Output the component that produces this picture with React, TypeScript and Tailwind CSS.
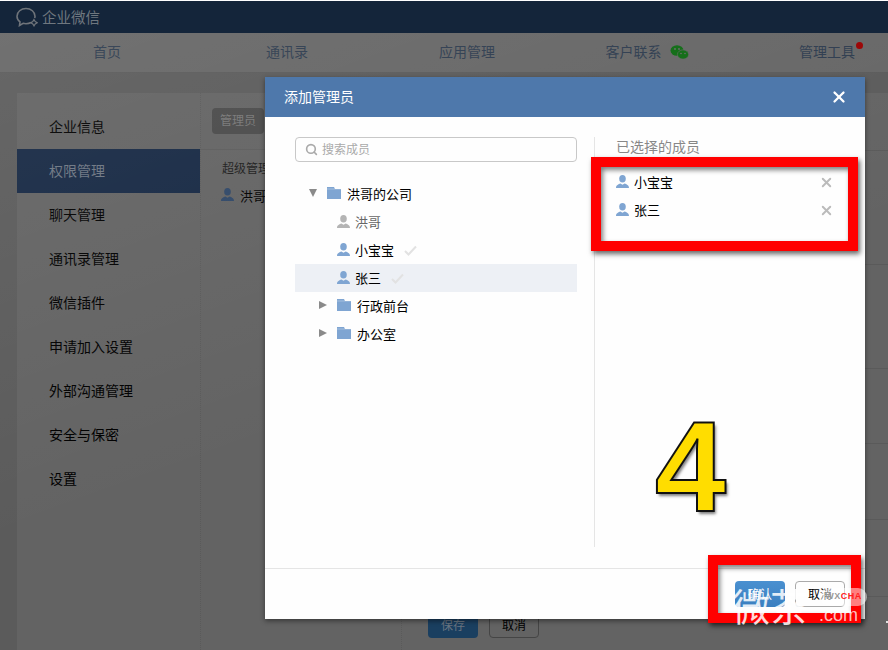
import React from 'react';
import { Search, X } from 'lucide-react';

const font = "font-['Noto_Sans_CJK_SC','Liberation_Sans',sans-serif]";

const Person: React.FC<{ color?: string }> = ({ color = '#7fa5d2' }) => (
  <svg width="13" height="13" viewBox="0 0 13 13" className="mb-[2px] shrink-0">
    <ellipse cx="6.5" cy="3.8" rx="3.300" ry="3.800" fill={color} />
    <path d="M0 13c0-2.900 2.600-3.600 4.400-4.400l2.100 1.100 2.100-1.100c1.800.8 4.400 1.500 4.400 4.400z" fill={color} />
  </svg>
);

const Folder: React.FC = () => (
  <svg width="14" height="12" viewBox="0 0 14 12" className="mb-[2px] shrink-0">
    <path d="M0 0h7l1 2h6v10H0z" fill="#7fa5d2" />
    <path d="M0 2h14" stroke="#fff" strokeWidth="0.6" opacity="0.5" />
  </svg>
);

const Arrow: React.FC<{ open?: boolean }> = ({ open }) => (
  <svg width="8" height="8" viewBox="0 0 8 8" className="mb-[2px] shrink-0">
    <path d={open ? 'M0 0h8L4 8z' : 'M0 0l8 4-8 4z'} fill="#8a8a8a" />
  </svg>
);

const Check: React.FC = () => (
  <svg width="13" height="11" viewBox="0 0 13 11" className="shrink-0">
    <path d="M1 6l3.500 3.500L12 1.500" fill="none" stroke="#e2e2e2" strokeWidth="2" />
  </svg>
);

const Wechat: React.FC = () => (
  <svg width="19" height="15" viewBox="0 0 19 15" className="mt-[2px] shrink-0">
    <ellipse cx="7" cy="5.500" rx="6.500" ry="5.200" fill="#0d6a12" />
    <ellipse cx="13" cy="9.500" rx="5.600" ry="4.600" fill="#0d6a12" stroke="#686868" strokeWidth="0.6" />
    <circle cx="5" cy="4" r="0.9" fill="#686868" />
    <circle cx="9" cy="4" r="0.9" fill="#686868" />
    <circle cx="11" cy="8.500" r="0.8" fill="#686868" />
    <circle cx="15" cy="8.500" r="0.8" fill="#686868" />
  </svg>
);

const Logo: React.FC = () => (
  <svg width="22" height="20" viewBox="0 0 22 20" className="shrink-0">
    <path d="M15 15.500c-1.400.8-3 1.200-5 1.200-1 0-2-.1-2.900-.4L3.500 18.500l.5-3.600C2 13.500 1 11.500 1 9.200 1 4.900 5 1.500 10 1.500s9 3.400 9 7.700c0 .7-.1 1.300-.3 1.900"
      fill="none" stroke="#6f747a" strokeWidth="1.600" />
    <path d="M18 12.500l1.200 2 2 1.200-2 1.200-1.200 2-1.200-2-2-1.200 2-1.200z" fill="none" stroke="#6f747a" strokeWidth="1.200" />
  </svg>
);

const navItems = ['首页', '通讯录', '应用管理'];
const sideItems = ['企业信息', '权限管理', '聊天管理', '通讯录管理', '微信插件', '申请加入设置', '外部沟通管理', '安全与保密', '设置'];
const rowHeights = ['h-[114px]', 'h-[104px]', 'h-[75px]', 'h-[76px]', 'h-[77px]'];

const TreeUser: React.FC<{ name: string; selected?: boolean; muted?: boolean; active?: boolean }> = ({ name, selected, muted, active }) => (
  <div className={`flex h-7 items-center pl-[42px] ${active ? 'bg-[#edf0f5]' : ''}`}>
    <Person color={muted ? '#b4b4b4' : '#7fa5d2'} />
    <span className={`ml-[5px] text-[13px] ${muted ? 'text-[#666]' : 'text-black'}`}>{name}</span>
    {selected && <span className="ml-[10px]"><Check /></span>}
  </div>
);

const TreeFolder: React.FC<{ name: string }> = ({ name }) => (
  <div className="flex h-7 items-center pl-6">
    <Arrow />
    <span className="ml-[10px]"><Folder /></span>
    <span className="ml-[6px] text-[13px] text-black">{name}</span>
  </div>
);

const Picked: React.FC<{ name: string }> = ({ name }) => (
  <div className="flex h-7 items-center">
    <Person />
    <span className="ml-[5px] text-[13px] text-black">{name}</span>
    <X size={15} strokeWidth={3} className="ml-auto text-[#bbb]" />
  </div>
);

const App: React.FC = () => {
  return (
    <div className={`relative h-[650px] w-[888px] overflow-hidden bg-[#5b5b5b] ${font}`}>
      <div className="h-px bg-white" />
      <div className="flex h-8 items-center gap-[4px] bg-[#14253a] pb-[1px] pl-[16px]">
        <Logo />
        <span className="text-[14.500px] text-[#6f777f]">企业微信</span>
      </div>
      <div className="flex h-10 border-b border-[#5a5a5a] bg-[#666] pb-[2px] pl-[17px]">
        {navItems.map(item => (
          <div key={item} className="flex w-[180px] shrink-0 items-center justify-center text-[14px] text-[#2d3b4e]">{item}</div>
        ))}
        <div className="flex w-[180px] shrink-0 items-center justify-center gap-2 text-[14px] text-[#2d3b4e]">
          客户联系
          <Wechat />
        </div>
        <div className="relative flex w-[180px] shrink-0 items-center justify-center text-[14px] text-[#2d3b4e]">
          管理工具
          <span className="absolute left-[119px] top-[9px] h-[7px] w-[7px] rounded-full bg-[#9a0000]" />
        </div>
      </div>

      <div className="ml-[17px] mt-5 flex h-[557px] bg-[#636363]">
        <div className="w-[184px] shrink-0 border-r border-dotted border-[#5a5a5a] pt-3">
          {sideItems.map(item => (
            <div
              key={item}
              className={`flex h-11 items-center pb-[2px] pl-8 text-[14px] ${item === '权限管理' ? 'bg-[#172944] text-[#6d7682]' : 'text-black'}`}
            >
              {item}
            </div>
          ))}
        </div>
        <div className="w-[201px] shrink-0 border-r border-dotted border-[#5a5a5a]">
          <div className="h-[57px] border-b border-[#5c5c5c] pl-[11px] pt-[15px]">
            <div className="flex h-[26px] w-[52px] items-center justify-center rounded-sm bg-[#4a4a4a] pb-[2px] text-[12px] text-[#777]">管理员</div>
          </div>
          <div className="pl-[21px] pt-[9px] text-[12px] text-[#1c1c1c]">超级管理员</div>
          <div className="mt-[9px] flex items-center gap-[6px] pl-5 text-[13px] text-black">
            <Person color="#2f4767" />
            洪哥
          </div>
        </div>
        <div className="flex-1">
          <div className="h-[58px] border-b border-[#5a5a5a]" />
          {rowHeights.map(h => (
            <div key={h} className={`${h} border-b border-[#5a5a5a]`} />
          ))}
          <div className="ml-[26px] mt-[15px] flex gap-[11px]">
            <div className="flex h-[26px] w-[50px] items-center justify-center rounded-sm bg-[#1a3f60] text-[12px] text-[#6a7580]">保存</div>
            <div className="flex h-[26px] w-[50px] items-center justify-center rounded-sm border border-[#454545] text-[12px] text-black">取消</div>
          </div>
        </div>
      </div>

      {/* the dim layer of the screenshot is lighter at the top left */}
      <div className="pointer-events-none absolute inset-x-0 bottom-0 top-[33px] bg-[linear-gradient(160deg,rgba(255,255,255,0.07),rgba(255,255,255,0)_55%)]" />

      <div className="absolute left-[265px] top-[77px] flex h-[542px] w-[600px] flex-col bg-[#fefefe] shadow-[0_2px_5px_rgba(0,0,0,0.45)]">
        <div className="flex h-10 shrink-0 items-center justify-between bg-[#4e78ab] pl-[19px] pr-[17px]">
          <span className="pb-[2px] text-[14px] text-white">添加管理员</span>
          <X size={18} strokeWidth={3} className="text-white" />
        </div>
        <div className="flex h-[451px] pt-5">
          <div className="ml-[30px] w-[282px] shrink-0">
            <div className="flex h-[25px] items-center rounded-sm border border-[#c8c8c8] pl-[9px]">
              <Search size={13} strokeWidth={3} className="text-[#aaa]" />
              <span className="ml-[4px] pb-[2px] text-[12px] text-[#aaa]">搜索成员</span>
            </div>
            <div className="mt-[18px]">
              <div className="flex h-7 items-center pl-[14px]">
                <Arrow open />
                <span className="ml-[10px]"><Folder /></span>
                <span className="ml-[6px] text-[13px] text-black">洪哥的公司</span>
              </div>
              <TreeUser name="洪哥" muted />
              <TreeUser name="小宝宝" selected />
              <TreeUser name="张三" selected active />
              <TreeFolder name="行政前台" />
              <TreeFolder name="办公室" />
            </div>
          </div>
          <div className="ml-[17px] h-[410px] flex-1 border-l border-[#e5e5e5] pl-[21px] pr-[31px]">
            <div className="text-[14px] leading-[18px] text-[#888]">已选择的成员</div>
            <div className="mt-[13px]">
              <Picked name="小宝宝" />
              <Picked name="张三" />
            </div>
          </div>
        </div>
        <div className="flex flex-1 items-start justify-end gap-[10px] border-t border-[#e5e5e5] pr-5 pt-3">
          <div className="flex h-[26px] w-[50px] items-center justify-center rounded-sm bg-[linear-gradient(#4a90d0,#3a7fc0)] text-[12px] text-white">确认</div>
          <div className="flex h-[26px] w-[50px] items-center justify-center rounded-sm border border-[#aaa] text-[12px] text-black">取消</div>
        </div>
      </div>

      <div className="absolute left-[591px] top-[157px] h-[94px] w-[267px] border-[10px] border-[#ff0000] shadow-[2px_3px_5px_rgba(0,0,0,0.6),inset_2px_3px_5px_rgba(0,0,0,0.5)]" />
      <div className="absolute left-[708px] top-[555px] h-[68px] w-[153px] border-[10px] border-[#ff0000] shadow-[2px_3px_5px_rgba(0,0,0,0.6),inset_2px_3px_5px_rgba(0,0,0,0.5)]" />

      <div className="absolute left-[655px] top-[392px] font-['Liberation_Sans',sans-serif] text-[128px] font-bold leading-[150px] text-[#ffdd00] [-webkit-text-stroke:2px_#111] [text-shadow:2px_3px_3px_rgba(0,0,0,0.5)]">4</div>

      {/* watermark */}
      <div className="absolute left-[820px] top-[588px] flex h-[18px] w-[47px] items-center justify-center rounded-full bg-white/50 font-['Liberation_Sans',sans-serif] text-[9px] font-bold tracking-[0.5px]">
        <span className="text-[#999]">WX</span>
        <span className="text-[#ff2020]">CHA</span>
      </div>
      <div className="absolute left-[732px] top-[577px] text-[38px] leading-[56px] text-white/85">微茶</div>
      <div className="absolute left-[819px] top-[604px] font-['Liberation_Sans',sans-serif] text-[18px] leading-[22px] text-white/75">.com</div>
      <div className="absolute left-[886px] top-[621px] h-[2px] w-[2px] bg-white/80" />
    </div>
  );
};

export default App;
